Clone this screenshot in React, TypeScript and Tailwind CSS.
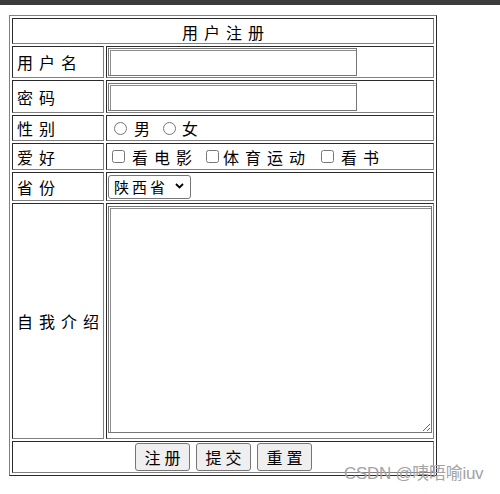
const cell =
  "border border-solid border-t-[#2a2a2a] border-l-[#2a2a2a] border-r-[#808080] border-b-[#808080] p-px leading-[20px]"
const labelCell = `${cell} align-middle`
const labelText = "block whitespace-nowrap pl-[3px] text-[16px] leading-[22px] tracking-[6px]"
const field =
  "border border-solid border-[#767676] bg-white shadow-[inset_1px_1px_0_#ffffff,inset_2px_2px_0_#8c8c8c] outline-none"
const btn =
  "h-[28px] w-[55px] rounded-[3px] border border-solid border-[#767676] bg-[#efefef] pl-[5px] text-[16px] leading-[20px] tracking-[4px]"

export default function App() {
  return (
    <div className="relative h-[494px] w-[500px] overflow-hidden bg-white text-black font-['Noto_Sans_CJK_SC',sans-serif]">
      <div className="h-[5px] bg-[#3c3c3c]" />

      <table className="ml-[9px] mt-[10px] w-[428px] table-fixed border-separate border-spacing-[2px] border border-solid border-t-[#808080] border-l-[#808080] border-r-[#2a2a2a] border-b-[#2a2a2a]">
        <colgroup>
          <col className="w-[92px]" />
          <col className="w-[328px]" />
        </colgroup>
        <tbody>
          <tr>
            <td colSpan={2} className={`${cell} h-[26px]`}>
              <div className="pl-[6px] pt-[2px] text-center text-[16px] leading-[20px] tracking-[6px]">用户注册</div>
            </td>
          </tr>
          <tr>
            <td className={`${labelCell} h-[32px]`}>
              <span className={labelText}>用户名</span>
            </td>
            <td className={cell}>
              <input type="text" className={`${field} block h-[28px] w-[249px]`} />
            </td>
          </tr>
          <tr>
            <td className={`${labelCell} h-[33px]`}>
              <span className={labelText}>密码</span>
            </td>
            <td className={cell}>
              <input type="password" className={`${field} block h-[28px] w-[249px]`} />
            </td>
          </tr>
          <tr>
            <td className={`${labelCell} h-[26px]`}>
              <span className={labelText}>性别</span>
            </td>
            <td className={cell}>
              <div className="flex items-center text-[16px] leading-[22px] tracking-[6px]">
                <input type="radio" name="sex" className="m-0 ml-[6px] h-[13px] w-[13px]" />
                <span className="ml-[7px]">男</span>
                <input type="radio" name="sex" className="m-0 ml-[7px] h-[13px] w-[13px]" />
                <span className="ml-[6px]">女</span>
              </div>
            </td>
          </tr>
          <tr>
            <td className={`${labelCell} h-[27px]`}>
              <span className={labelText}>爱好</span>
            </td>
            <td className={cell}>
              <div className="flex items-center text-[16px] leading-[22px] tracking-[6px]">
                <input type="checkbox" className="m-0 ml-[4px] h-[13px] w-[13px]" />
                <span className="ml-[7px]">看电影</span>
                <input type="checkbox" className="m-0 ml-[8px] h-[13px] w-[13px]" />
                <span className="ml-[4px]">体育运动</span>
                <input type="checkbox" className="m-0 ml-[10px] h-[13px] w-[13px]" />
                <span className="ml-[7px]">看书</span>
              </div>
            </td>
          </tr>
          <tr>
            <td className={`${labelCell} h-[29px]`}>
              <span className={labelText}>省份</span>
            </td>
            <td className={cell}>
              <div className="relative h-[24px] w-[83px]">
                <select className="h-full w-full appearance-none rounded-[3px] border border-solid border-[#767676] bg-white pl-[5px] text-[15px] leading-[20px] tracking-[3px] outline-none">
                  <option>陕西省</option>
                  <option>河南省</option>
                  <option>山西省</option>
                </select>
                <svg
                  className="pointer-events-none absolute right-[7px] top-[8px]"
                  width="9"
                  height="6"
                  viewBox="0 0 9 6"
                >
                  <path d="M1 1l3.5 3.5L8 1" stroke="#000" strokeWidth="1.8" fill="none" />
                </svg>
              </div>
            </td>
          </tr>
          <tr>
            <td className={`${labelCell} h-[236px]`}>
              <span className={labelText}>自我介绍</span>
            </td>
            <td className={`${cell} align-top`}>
              <textarea className={`${field} mt-px block h-[227px] w-[324px] resize-y`} />
            </td>
          </tr>
          <tr>
            <td colSpan={2} className={`${cell} h-[32px]`}>
              <div className="flex justify-center gap-[6px]">
                <button className={btn}>注册</button>
                <button className={btn}>提交</button>
                <button className={btn}>重置</button>
              </div>
            </td>
          </tr>
        </tbody>
      </table>

      {/* watermark */}
      <div className="absolute left-[344px] top-[464px] whitespace-nowrap text-[17px] leading-[20px] tracking-[-0.3px] text-[#a3a3a3] font-['Liberation_Sans','Noto_Sans_CJK_SC',sans-serif]">
        CSDN @咦晤喻iuv
      </div>
    </div>
  )
}
